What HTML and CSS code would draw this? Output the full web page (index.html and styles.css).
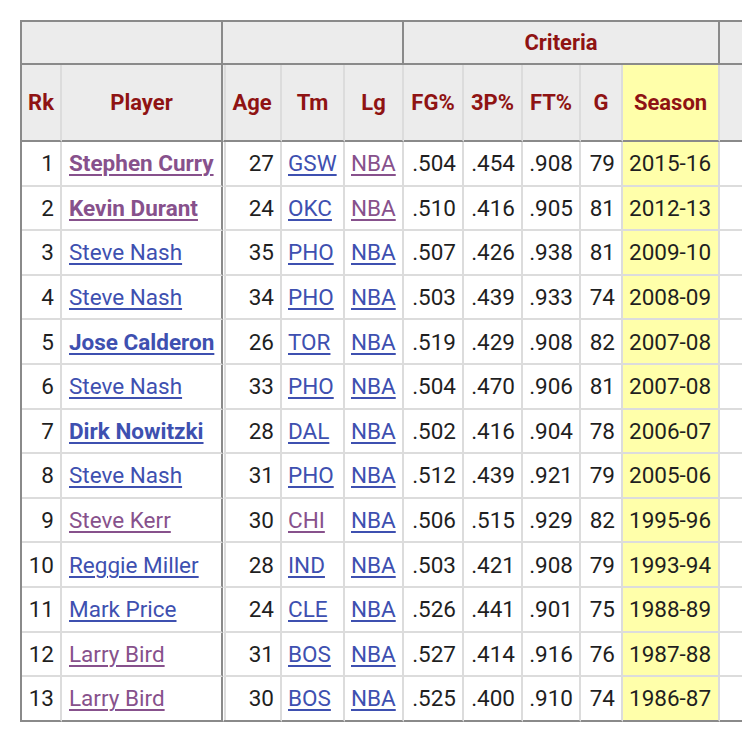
FILE: index.html
```html
<!DOCTYPE html>
<html>
<head>
<meta charset="utf-8">
<link rel="stylesheet" href="styles.css">
</head>
<body>
<div class="frame">
<table class="stats">
<colgroup>
<col class="c-rk"><col class="c-player"><col class="c-age"><col class="c-tm"><col class="c-lg"><col class="c-fg"><col class="c-3p"><col class="c-ft"><col class="c-g"><col class="c-season"><col class="c-extra">
</colgroup>
<thead>
<tr class="over">
<th colspan="2" class="grp"></th>
<th colspan="3" class="grp"></th>
<th colspan="5" class="grp">Criteria</th>
<th></th>
</tr>
<tr class="cols">
<th>Rk</th>
<th class="end-player">Player</th>
<th class="after-player">Age</th>
<th>Tm</th>
<th>Lg</th>
<th>FG%</th>
<th>3P%</th>
<th>FT%</th>
<th>G</th>
<th class="season">Season</th>
<th></th>
</tr>
</thead>
<tbody>
<tr><td class="num">1</td><td class="end-player"><a class="v b" href="#">Stephen Curry</a></td><td class="num after-player">27</td><td class="txt"><a href="#">GSW</a></td><td class="txt"><a class="v" href="#">NBA</a></td><td class="num">.504</td><td class="num">.454</td><td class="num">.908</td><td class="num">79</td><td class="season txt">2015-16</td><td></td></tr>
<tr><td class="num">2</td><td class="end-player"><a class="v b" href="#">Kevin Durant</a></td><td class="num after-player">24</td><td class="txt"><a href="#">OKC</a></td><td class="txt"><a class="v" href="#">NBA</a></td><td class="num">.510</td><td class="num">.416</td><td class="num">.905</td><td class="num">81</td><td class="season txt">2012-13</td><td></td></tr>
<tr><td class="num">3</td><td class="end-player"><a href="#">Steve Nash</a></td><td class="num after-player">35</td><td class="txt"><a href="#">PHO</a></td><td class="txt"><a href="#">NBA</a></td><td class="num">.507</td><td class="num">.426</td><td class="num">.938</td><td class="num">81</td><td class="season txt">2009-10</td><td></td></tr>
<tr><td class="num">4</td><td class="end-player"><a href="#">Steve Nash</a></td><td class="num after-player">34</td><td class="txt"><a href="#">PHO</a></td><td class="txt"><a href="#">NBA</a></td><td class="num">.503</td><td class="num">.439</td><td class="num">.933</td><td class="num">74</td><td class="season txt">2008-09</td><td></td></tr>
<tr><td class="num">5</td><td class="end-player"><a class="b" href="#">Jose Calderon</a></td><td class="num after-player">26</td><td class="txt"><a href="#">TOR</a></td><td class="txt"><a href="#">NBA</a></td><td class="num">.519</td><td class="num">.429</td><td class="num">.908</td><td class="num">82</td><td class="season txt">2007-08</td><td></td></tr>
<tr><td class="num">6</td><td class="end-player"><a href="#">Steve Nash</a></td><td class="num after-player">33</td><td class="txt"><a href="#">PHO</a></td><td class="txt"><a href="#">NBA</a></td><td class="num">.504</td><td class="num">.470</td><td class="num">.906</td><td class="num">81</td><td class="season txt">2007-08</td><td></td></tr>
<tr><td class="num">7</td><td class="end-player"><a class="b" href="#">Dirk Nowitzki</a></td><td class="num after-player">28</td><td class="txt"><a href="#">DAL</a></td><td class="txt"><a href="#">NBA</a></td><td class="num">.502</td><td class="num">.416</td><td class="num">.904</td><td class="num">78</td><td class="season txt">2006-07</td><td></td></tr>
<tr><td class="num">8</td><td class="end-player"><a href="#">Steve Nash</a></td><td class="num after-player">31</td><td class="txt"><a href="#">PHO</a></td><td class="txt"><a href="#">NBA</a></td><td class="num">.512</td><td class="num">.439</td><td class="num">.921</td><td class="num">79</td><td class="season txt">2005-06</td><td></td></tr>
<tr><td class="num">9</td><td class="end-player"><a class="v" href="#">Steve Kerr</a></td><td class="num after-player">30</td><td class="txt"><a class="v" href="#">CHI</a></td><td class="txt"><a href="#">NBA</a></td><td class="num">.506</td><td class="num">.515</td><td class="num">.929</td><td class="num">82</td><td class="season txt">1995-96</td><td></td></tr>
<tr><td class="num">10</td><td class="end-player"><a href="#">Reggie Miller</a></td><td class="num after-player">28</td><td class="txt"><a href="#">IND</a></td><td class="txt"><a href="#">NBA</a></td><td class="num">.503</td><td class="num">.421</td><td class="num">.908</td><td class="num">79</td><td class="season txt">1993-94</td><td></td></tr>
<tr><td class="num">11</td><td class="end-player"><a href="#">Mark Price</a></td><td class="num after-player">24</td><td class="txt"><a href="#">CLE</a></td><td class="txt"><a href="#">NBA</a></td><td class="num">.526</td><td class="num">.441</td><td class="num">.901</td><td class="num">75</td><td class="season txt">1988-89</td><td></td></tr>
<tr><td class="num">12</td><td class="end-player"><a class="v" href="#">Larry Bird</a></td><td class="num after-player">31</td><td class="txt"><a href="#">BOS</a></td><td class="txt"><a href="#">NBA</a></td><td class="num">.527</td><td class="num">.414</td><td class="num">.916</td><td class="num">76</td><td class="season txt">1987-88</td><td></td></tr>
<tr class="last"><td class="num">13</td><td class="end-player"><a class="v" href="#">Larry Bird</a></td><td class="num after-player">30</td><td class="txt"><a href="#">BOS</a></td><td class="txt"><a href="#">NBA</a></td><td class="num">.525</td><td class="num">.400</td><td class="num">.910</td><td class="num">74</td><td class="season txt">1986-87</td><td></td></tr>
</tbody>
</table>
</div>
</body>
</html>
```
FILE: styles.css
```css
html, body {
  margin: 0;
  padding: 0;
  background: #ffffff;
}
.frame {
  width: 742px;
  height: 738px;
  overflow: hidden;
  padding: 20px 0 0 20px;
  box-sizing: border-box;
}
.stats {
  border-collapse: separate;
  border-spacing: 0;
  table-layout: fixed;
  width: 780px;
  font-family: Roboto, "Liberation Sans", sans-serif;
  font-size: 22.5px;
  color: #1f1f1f;
  border-left: 2px solid #8a8a8a;
  border-top: 2px solid #8a8a8a;
}
.c-rk { width: 40px; }
.c-player { width: 161px; }
.c-age { width: 59px; }
.c-tm { width: 63px; }
.c-lg { width: 59px; }
.c-fg { width: 60px; }
.c-3p { width: 59px; }
.c-ft { width: 58px; }
.c-g { width: 42px; }
.c-season { width: 97px; }
.c-extra { width: 80px; }

.stats th, .stats td {
  box-sizing: border-box;
  border-right: 2px solid #dcdcdc;
  border-bottom: 2px solid #dcdcdc;
  padding: 0 6px;
  white-space: nowrap;
  overflow: hidden;
}
.stats th {
  background: #ececec;
  color: #8f1313;
  font-size: 22px;
  font-weight: 700;
  text-align: center;
  padding: 0 2px;
}
.over th {
  height: 43px;
  border-bottom-color: #8a8a8a;
}
.over th.grp {
  border-right-color: #8a8a8a;
}
.cols th {
  height: 77px;
  border-bottom-color: #8a8a8a;
}
.stats td {
  height: 44.6px;
}
.stats tr.last td {
  border-bottom-color: #8a8a8a;
}
.stats .end-player {
  border-right-color: #8a8a8a;
}
.stats .after-player {
  border-left: 1px solid transparent;
  box-shadow: inset 2px 0 0 #dcdcdc;
}
.stats th.season, .stats td.season {
  background: #ffffaa;
}
.stats td.num {
  text-align: right;
}
.stats td.txt {
  text-align: left;
}
.stats td.end-player {
  text-align: left;
  padding-left: 7px;
}
.stats a {
  color: #3e50b0;
  text-decoration: underline;
  text-decoration-thickness: 1.5px;
  text-underline-offset: 3px;
}
.stats a.v {
  color: #87518c;
}
.stats a.b {
  font-weight: 700;
}
```
